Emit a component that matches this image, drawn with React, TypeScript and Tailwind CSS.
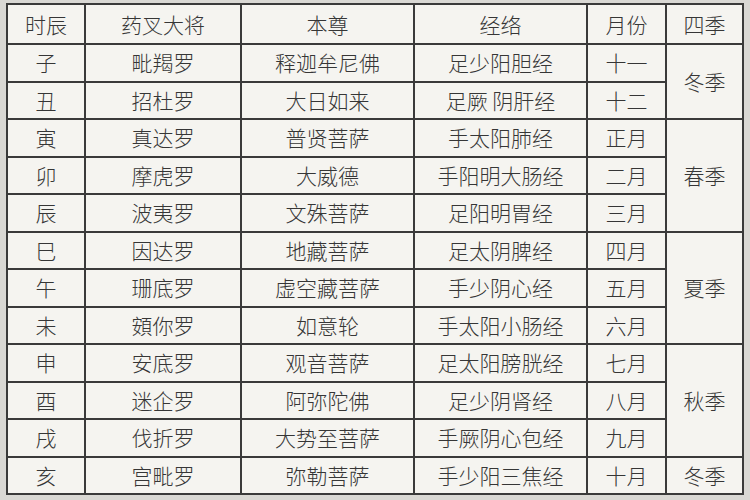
import React from "react";

const rows: [string, string, string, string, string][] = [
  ["子", "毗羯罗", "释迦牟尼佛", "足少阳胆经", "十一"],
  ["丑", "招杜罗", "大日如来", "足厥 阴肝经", "十二"],
  ["寅", "真达罗", "普贤菩萨", "手太阳肺经", "正月"],
  ["卯", "摩虎罗", "大威德", "手阳明大肠经", "二月"],
  ["辰", "波夷罗", "文殊菩萨", "足阳明胃经", "三月"],
  ["巳", "因达罗", "地藏菩萨", "足太阴脾经", "四月"],
  ["午", "珊底罗", "虚空藏菩萨", "手少阴心经", "五月"],
  ["未", "頞你罗", "如意轮", "手太阳小肠经", "六月"],
  ["申", "安底罗", "观音菩萨", "足太阳膀胱经", "七月"],
  ["酉", "迷企罗", "阿弥陀佛", "足少阴肾经", "八月"],
  ["戌", "伐折罗", "大势至菩萨", "手厥阴心包经", "九月"],
  ["亥", "宫毗罗", "弥勒菩萨", "手少阳三焦经", "十月"],
];

// season cell that starts at a given row index, with its span class
const seasonAt: Record<number, { name: string; cls: string }> = {
  0: { name: "冬季", cls: "row-span-2" },
  2: { name: "春季", cls: "row-span-3" },
  5: { name: "夏季", cls: "row-span-3" },
  8: { name: "秋季", cls: "row-span-3" },
  11: { name: "冬季", cls: "row-span-1" },
};

const cell =
  "bg-[#f5f4f0] flex items-center justify-center text-[21px] leading-none text-[#363636] whitespace-pre";

const headers = ["时辰", "药叉大将", "本尊", "经络", "月份", "四季"];

export default function App() {
  return (
    <div className="w-[750px] h-[500px] bg-[#d9d8d4] pt-[3px] pl-[6px] overflow-hidden font-['Noto_Sans_CJK_SC','Noto_Sans_CJK_TC',sans-serif]">
      <div className="w-[738px] bg-[#3a3a3a] p-[2px] grid gap-[2px] grid-cols-[76px_154px_171px_171px_77px_75px] grid-rows-[38px_repeat(12,35.5px)] font-light">
        {headers.map((h) => (
          <div key={h} className={cell}>
            {h}
          </div>
        ))}
        {rows.map((r, ri) => (
          <React.Fragment key={ri}>
            {r.map((t, ci) => (
              <div key={ci} className={cell}>
                {t}
              </div>
            ))}
            {seasonAt[ri] && (
              <div className={`${cell} ${seasonAt[ri].cls}`}>{seasonAt[ri].name}</div>
            )}
          </React.Fragment>
        ))}
      </div>
    </div>
  );
}
